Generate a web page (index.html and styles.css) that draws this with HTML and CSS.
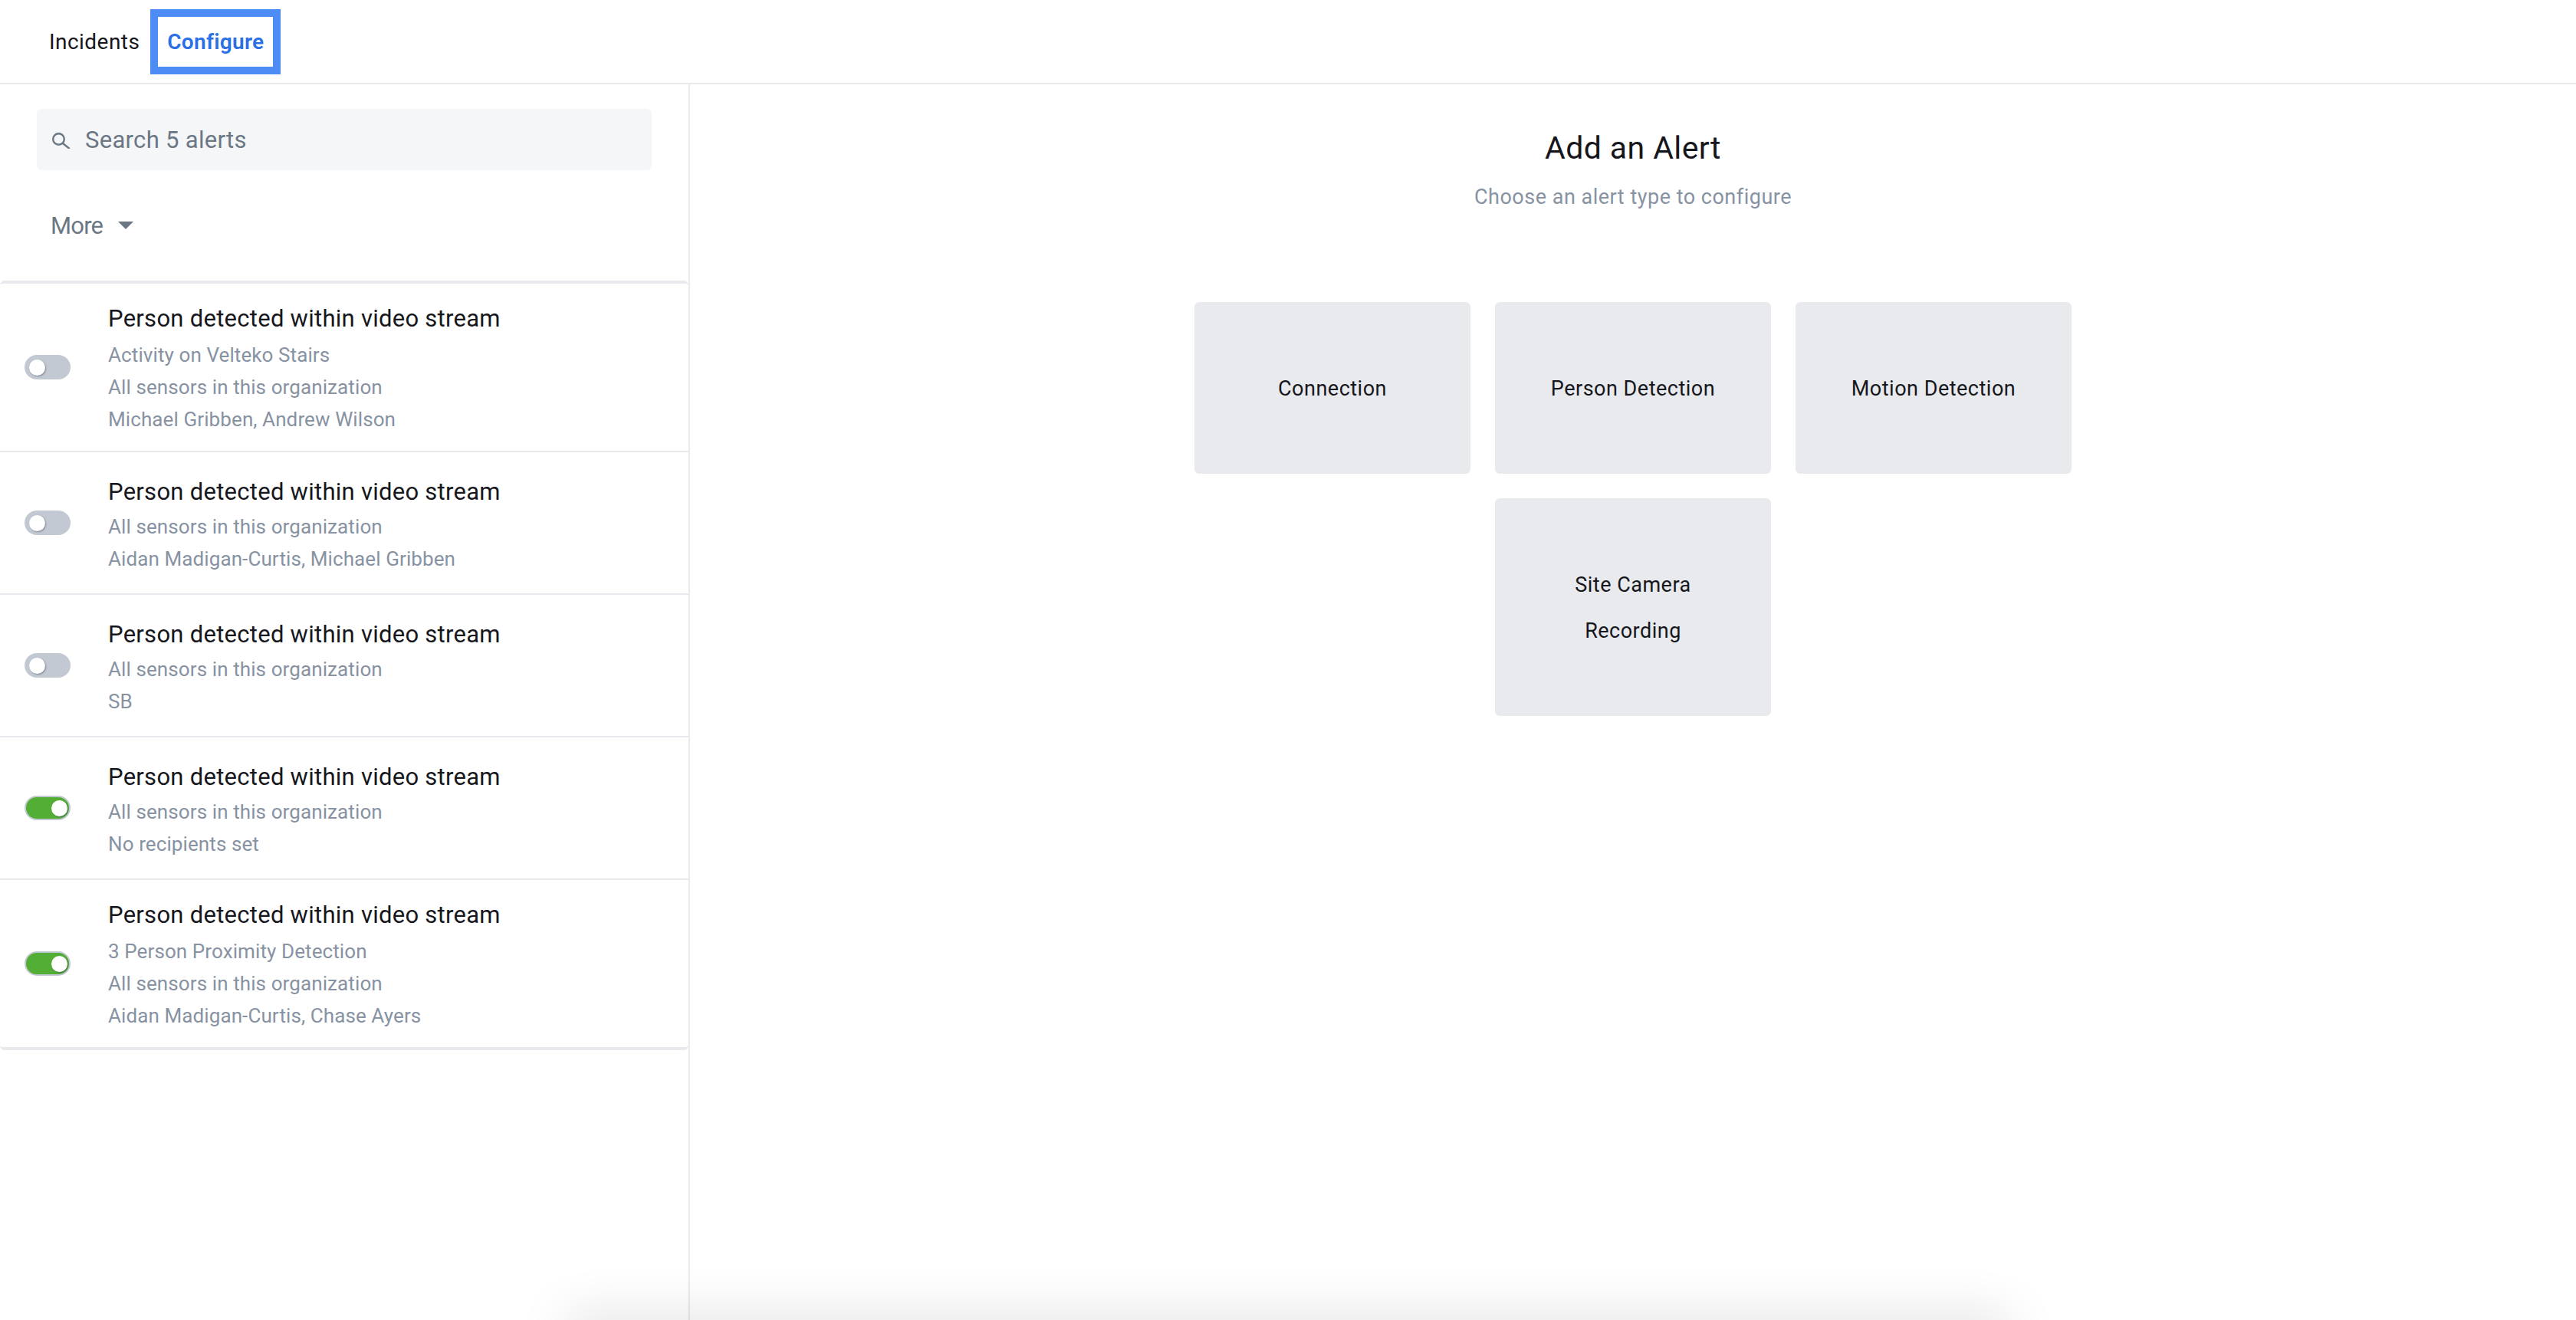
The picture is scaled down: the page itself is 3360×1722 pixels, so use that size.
FILE: index.html
```html
<!DOCTYPE html>
<html lang="en">
<head>
    <meta charset="UTF-8">
    <title>Alerts - Configure</title>
    <link rel="stylesheet" href="styles.css">
</head>
<body>
    <div class="top-nav">
        <a class="nav-tab">Incidents</a>
        <a class="nav-tab nav-tab-active">Configure</a>
    </div>

    <div class="content">
        <div class="sidebar">
            <div class="search-box">
                <svg class="search-icon" width="24" height="24" viewBox="0 0 24 24" fill="none" stroke="#6b7785" stroke-width="2.4" stroke-linecap="round">
                    <circle cx="8.5" cy="11.5" r="7.3"/>
                    <path d="M14 17l8 6.5"/>
                </svg>
                <span>Search 5 alerts</span>
            </div>
            <div class="more-row">
                <span>More</span>
                <span class="more-arrow"></span>
            </div>

            <div class="alert-list">
                <div class="alert-row alert-row-tall">
                    <div class="toggle"><span class="knob"></span></div>
                    <div class="alert-text">
                        <div class="alert-title">Person detected within video stream</div>
                        <div class="alert-line">Activity on Velteko Stairs</div>
                        <div class="alert-line">All sensors in this organization</div>
                        <div class="alert-line">Michael Gribben, Andrew Wilson</div>
                    </div>
                </div>
                <div class="alert-row">
                    <div class="toggle"><span class="knob"></span></div>
                    <div class="alert-text">
                        <div class="alert-title">Person detected within video stream</div>
                        <div class="alert-line">All sensors in this organization</div>
                        <div class="alert-line">Aidan Madigan-Curtis, Michael Gribben</div>
                    </div>
                </div>
                <div class="alert-row">
                    <div class="toggle"><span class="knob"></span></div>
                    <div class="alert-text">
                        <div class="alert-title">Person detected within video stream</div>
                        <div class="alert-line">All sensors in this organization</div>
                        <div class="alert-line">SB</div>
                    </div>
                </div>
                <div class="alert-row">
                    <div class="toggle toggle-on"><span class="knob"></span></div>
                    <div class="alert-text">
                        <div class="alert-title">Person detected within video stream</div>
                        <div class="alert-line">All sensors in this organization</div>
                        <div class="alert-line">No recipients set</div>
                    </div>
                </div>
                <div class="alert-row alert-row-tall">
                    <div class="toggle toggle-on"><span class="knob"></span></div>
                    <div class="alert-text">
                        <div class="alert-title">Person detected within video stream</div>
                        <div class="alert-line">3 Person Proximity Detection</div>
                        <div class="alert-line">All sensors in this organization</div>
                        <div class="alert-line">Aidan Madigan-Curtis, Chase Ayers</div>
                    </div>
                </div>
            </div>
        </div>

        <div class="main">
            <h1 class="main-title">Add an Alert</h1>
            <p class="main-sub">Choose an alert type to configure</p>
            <div class="type-grid">
                <div class="type-card">Connection</div>
                <div class="type-card">Person Detection</div>
                <div class="type-card">Motion Detection</div>
                <div class="type-card">Site Camera<br>Recording</div>
            </div>
        </div>
    </div>

    <div class="bottom-shadow"></div>
</body>
</html>
```

FILE: styles.css
```css
html, body {
    height: 100%;
}
body {
    margin: 0;
    overflow: hidden;
    position: relative;
    background: white;
    color: #16171c;
    font-family: Roboto, "Liberation Sans", sans-serif;
}
.top-nav {
    display: flex;
    align-items: center;
    height: 108px;
    padding-left: 64px;
    border-bottom: 2px solid #e9eaee;
    font-size: 28px;
    letter-spacing: 0.45px;
}
.nav-tab {
    margin-right: 14px;
}
.nav-tab-active {
    box-sizing: border-box;
    width: 170px;
    height: 85px;
    line-height: 65px;
    text-align: center;
    border: 10px solid #4d8cf5;
    color: #2b6fe6;
    font-weight: 600;
    letter-spacing: 0.3px;
}
.content {
    display: flex;
    height: calc(100% - 110px);
}
.sidebar {
    width: 898px;
    border-right: 2px solid #e9eaee;
}
.search-box {
    display: flex;
    align-items: center;
    height: 80px;
    margin: 32px 48px 0;
    padding-left: 20px;
    border-radius: 6px;
    background: #f5f6f8;
    color: #6b7785;
    font-size: 31px;
    letter-spacing: 0.3px;
}
.search-icon {
    margin-right: 19px;
}
.more-row {
    display: flex;
    align-items: center;
    height: 144px;
    padding-left: 66px;
    color: #6b7785;
    font-size: 31px;
    letter-spacing: -0.8px;
}
.more-arrow {
    width: 0;
    height: 0;
    margin-left: 20px;
    border-left: 10px solid transparent;
    border-right: 10px solid transparent;
    border-top: 10px solid #6b7785;
}
.alert-list {
    border-top: 4px solid #e9eaee;
    border-bottom: 4px solid #e9eaee;
    border-radius: 6px;
}
.alert-row {
    display: flex;
    align-items: center;
    padding: 26px 0 24px 32px;
    border-bottom: 2px solid #e9eaee;
}
.alert-row-tall {
    padding-top: 20px;
    padding-bottom: 20px;
}
.alert-row:last-child {
    border-bottom: none;
}
.toggle {
    box-sizing: border-box;
    display: flex;
    align-items: center;
    width: 60px;
    height: 32px;
    margin-right: 49px;
    margin-bottom: 2px;
    padding: 0 6px;
    border-radius: 16px;
    background: #c3c9d2;
}
.alert-row-tall .toggle {
    margin-bottom: 0;
}
.toggle-on {
    justify-content: flex-end;
    border: 2px solid #c3c9d2;
    padding: 0 2px;
    background: #53ae36;
}
.knob {
    width: 21px;
    height: 21px;
    border-radius: 50%;
    background: white;
    box-shadow: 1px 1px 2px rgba(60, 70, 85, 0.5);
}
.alert-title {
    margin-bottom: -2px;
    font-size: 31px;
    line-height: 52px;
    letter-spacing: 0.27px;
}
.alert-row-tall .alert-title {
    margin-bottom: 0;
}
.alert-line {
    color: #8792a2;
    font-size: 26px;
    line-height: 42px;
    letter-spacing: 0.1px;
}
.main {
    flex: 1;
    text-align: center;
}
.main-title {
    margin: 55px 0 0;
    font-size: 41px;
    font-weight: 400;
    line-height: 56px;
    letter-spacing: 0.4px;
}
.main-sub {
    margin: 17px 0 0;
    color: #8792a2;
    font-size: 27px;
    line-height: 38px;
    letter-spacing: 0.5px;
}
.type-grid {
    display: flex;
    flex-wrap: wrap;
    justify-content: center;
    gap: 32px;
    width: 1144px;
    margin: 118px auto 0;
}
.type-card {
    box-sizing: border-box;
    width: 360px;
    padding: 83px 0 81px;
    border-radius: 6px;
    background: #e9eaee;
    font-size: 27px;
    line-height: 60px;
    letter-spacing: 0.5px;
}
/* edge of a panel sitting just below the window */
.bottom-shadow {
    position: absolute;
    left: 740px;
    right: 740px;
    top: 100%;
    height: 40px;
    box-shadow: 0 0 70px rgba(0, 0, 0, 0.16);
}
```
